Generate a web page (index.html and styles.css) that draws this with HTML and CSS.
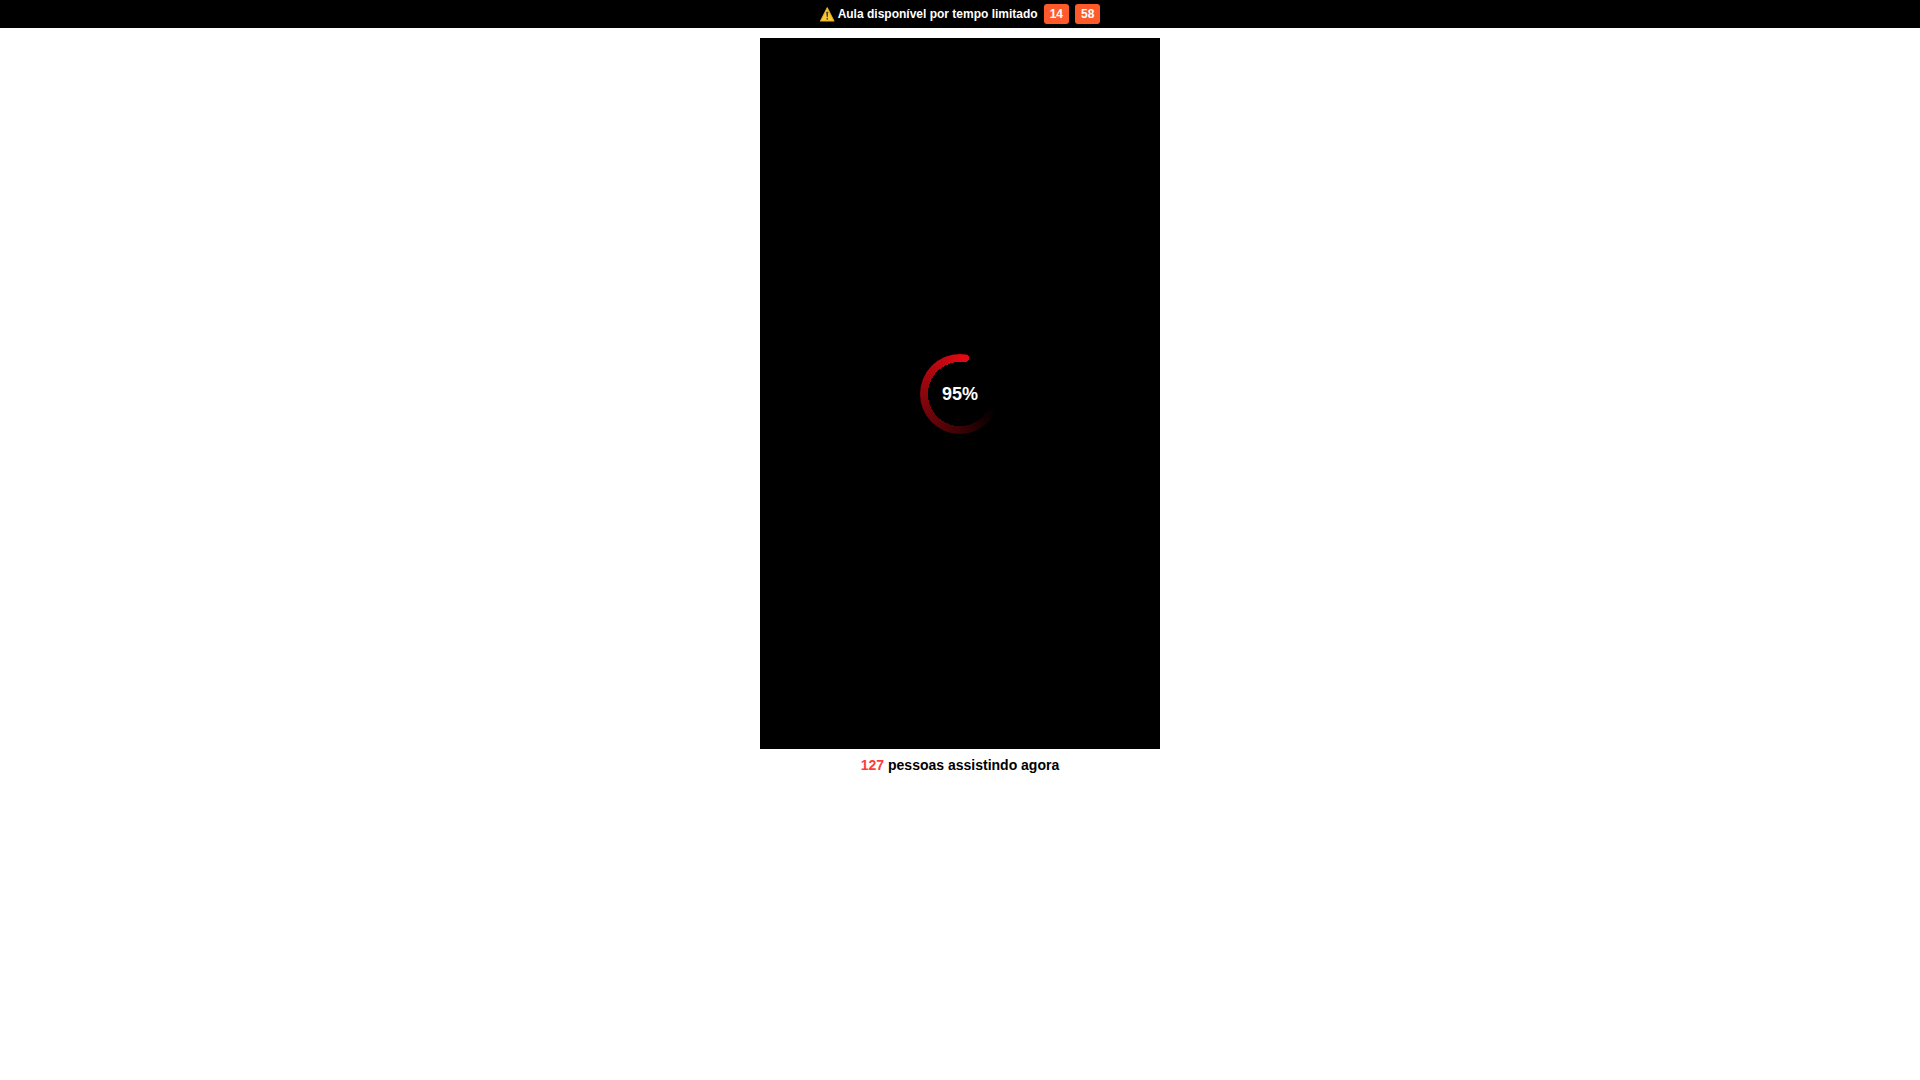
FILE: index.html
```html
<!DOCTYPE html>
<html lang="pt-BR">
<head>
    <meta charset="UTF-8">
    <meta name="viewport" content="width=device-width, initial-scale=1.0">
    <title>Aula disponível por tempo limitado</title>
    <link rel="stylesheet" href="styles.css">
</head>
<body>
    <header class="top-bar">
        <p class="notice">
            <svg class="warning" viewBox="0 0 28 28" aria-hidden="true">
                <path d="M13.5 1.5 L26 26 H1 Z" fill="#fcc934" stroke="#e8ad27" stroke-width="2" stroke-linejoin="round"/>
                <path d="M11.5 9.5 Q13.5 7.5 15.5 9.5 L14.5 19 H12.5 Z" fill="#424242"/>
                <circle cx="13.5" cy="22" r="1.6" fill="#424242"/>
            </svg>
            <span>Aula disponível por tempo limitado</span>
        </p>
        <div class="timer">
            <span class="time" id="minutes">14</span>
            <span class="time" id="seconds">58</span>
        </div>
    </header>

    <main>
        <div class="video">
            <div class="loader">
                <div class="ring"></div>
                <span class="percent">95%</span>
            </div>
        </div>
        <p class="viewers"><span class="count">127</span> pessoas assistindo agora</p>
    </main>
</body>
</html>
```

FILE: styles.css
```css
* {
    box-sizing: border-box;
}

body {
    font-family: Arial, "Liberation Sans", sans-serif;
    background-color: #fff;
    color: #000;
    margin: 0;
}

p {
    margin: 0;
}

.top-bar {
    display: flex;
    justify-content: center;
    align-items: center;
    gap: 6px;
    padding: 4px;
    background-color: #000;
    color: #fff;
    font-size: 12px;
    font-weight: bold;
    line-height: 14px;
}

.notice {
    display: flex;
    align-items: center;
    gap: 3px;
}

.warning {
    width: 15px;
    height: 15px;
}

.timer {
    display: flex;
    gap: 6px;
}

.time {
    padding: 3px 6px;
    border-radius: 3px;
    background-color: #ff5a2c;
}

.video {
    display: grid;
    place-items: center;
    width: 100%;
    max-width: 400px;
    aspect-ratio: 9 / 16;
    margin: 10px auto 0;
    background-color: #000;
}

/* ring and percentage share one grid cell */
.loader {
    display: grid;
    place-items: center;
}

.ring,
.percent {
    grid-area: 1 / 1;
}

.ring {
    width: 80px;
    height: 80px;
    border-radius: 50%;
    background:
        radial-gradient(circle at 45px 4px, #e30914 4px, transparent 4px),
        radial-gradient(circle, #000 32px, transparent 32px),
        conic-gradient(from 8deg, transparent 105deg, #e30914 360deg);
}

.percent {
    color: #fff;
    font-size: 18px;
    font-weight: bold;
    line-height: 22px;
}

.viewers {
    margin-top: 8px;
    text-align: center;
    font-size: 14px;
    font-weight: bold;
    line-height: 16px;
}

.count {
    color: #ff3b3b;
}
```
